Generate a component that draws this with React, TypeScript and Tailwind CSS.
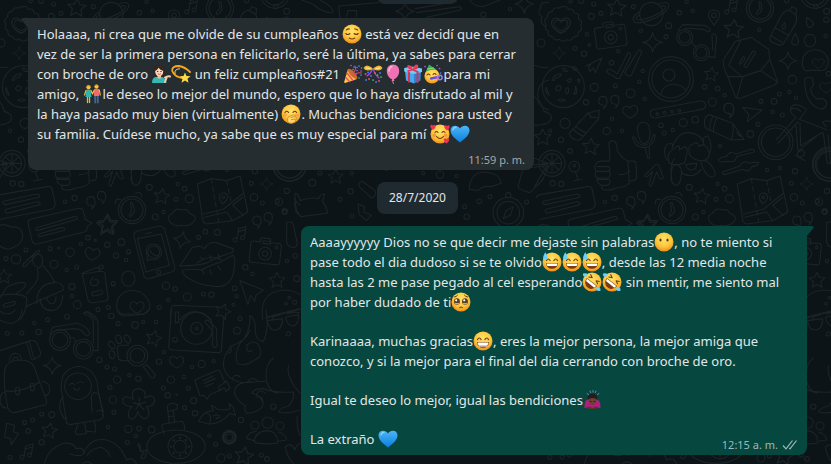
import type { ReactNode } from "react";

const STAR = "M0-25 L8-9 L25-8 L12 4 L16 22 L0 13 L-15 22 L-11 4 L-25-7 L-8-9Z";
const SPARK = "M0-28 Q3-4 28 0 Q4 4 0 28 Q-4 4-28 0 Q-4-4 0-28Z";
const HEART = "M0 19 C-12 13-25 2-22-9 C-19-20-5-20 0-10 C5-20 20-20 22-9 C24 2 12 13 0 19Z";
const QUOTE = "M-2 12 C-17 12-18-13-2-14 C15-14 15 10 1 23 C4 17 4 12-2 12Z";
const NOTES = "M-10 14 L-5-18 L17-24 L12 8 M-7-9 L15-15 M-10 14 a6 6 0 1 0 0 3 M12 8 a6 6 0 1 0 0 3";

type Mark = [x: number, y: number, scale?: number, rotate?: number];

function Marks({ d, at }: { d: string; at: Mark[] }) {
  return (
    <>
      {at.map(([x, y, s = 1, r = 0]) => (
        <path key={`${x}-${y}`} d={d} transform={`translate(${x} ${y}) rotate(${r}) scale(${s})`} />
      ))}
    </>
  );
}

function Dots({ at }: { at: [number, number, number][] }) {
  return (
    <>
      {at.map(([x, y, r]) => (
        <circle key={`${x}-${y}`} cx={x} cy={y} r={r} />
      ))}
    </>
  );
}

function Camera({ x, y, turn }: { x: number; y: number; turn: number }) {
  return (
    <g transform={`translate(${x} ${y}) rotate(${turn})`}>
      <path d="M-38-30 H-18 V-38 Q-18-42-14-42 H8 Q12-42 12-38 V-30 H38 Q46-30 46-22 V24 Q46 34 38 34 H-38 Q-46 34-46 24 V-22 Q-46-30-38-30Z M-10-34 H12 V-26 H-10Z" />
      <circle cx="0" cy="4" r="19" />
      <circle cx="0" cy="4" r="8" />
      <circle cx="32" cy="-18" r="4" />
    </g>
  );
}

function Clock({ x, y }: { x: number; y: number }) {
  return (
    <g transform={`translate(${x} ${y})`}>
      <circle r="41" />
      <circle r="33" />
      <path d="M-4-20 Q2-22 4-14 L6 4 Q4 10-8 19 Q-14 16-8 8 L0 0Z" />
    </g>
  );
}

function UpperDoodles() {
  return (
    <g transform="translate(30 0)">
      <path d="M35 22 q13-8 20 6 q16-4 17 11 q18 0 14 17 q14 8 6 20 q8 15-7 20 q2 15-15 15 q-5 14-19 8 q-13 10-22-1 q-16 6-21-8 q-16-1-14-17 q-14-7-6-20 q-10-14 5-22 q-2-16 14-17 q6-15 19-9 q4-8 9-3Z" />
      <Marks d={HEART} at={[[33, 76, 1.25], [33, 76, 0.9], [241, 335, 1, -5], [828, 262, 0.85], [805, 190, 0.8]]} />
      <Marks d={STAR} at={[[200, 23, 1.1, 5], [551, 87, 1.15, 5], [484, 223, 0.85, 8], [122, 440, 1, 5], [455, 589, 0.95, 8], [293, 672, 1.2]]} />
      <Marks d={SPARK} at={[[308, 127, 1.05], [714, 182, 0.95], [28, 160, 0.7], [770, 552, 0.7]]} />
      <Marks d={QUOTE} at={[[160, 303], [196, 300], [244, 604], [276, 588], [742, 662], [776, 652], [538, 326, 1.2]]} />
      <Marks d={NOTES} at={[[546, 20, 1]]} />
      <Camera x={182} y={108} turn={-8} />
      <circle cx="304" cy="42" r="35" />
      <path d="M268 36 C240 52 245 72 272 68 C310 62 355 36 356 18 C356 4 340 6 328 12 M269 44 C250 56 256 62 276 59 C304 54 344 34 346 22 C346 14 338 17 332 20" />
      <path d="M492 76 C486 62 474 58 475 44 C478 24 508 26 509 46 C508 60 498 64 492 76Z" />
      <circle cx="492" cy="46" r="7" />
      <Clock x={630} y={25} />
      <circle cx="795" cy="-18" r="43" />
      <circle cx="795" cy="-18" r="33" />
      <path d="M714 30 L738 44 Q744 62 732 80 L700 132 Q690 140 674 130 Q656 124 660 112 L690 54 Q698 36 714 30Z M720 30 L726 20 L740 26 L738 44 M676 84 L716 106 M664 108 L698 128 M704 68 q-14 14-4 20 q10 0 4-20Z" />
      <path d="M770 52 q-2 28 6 30 q12 0 15-12 q-8-10-21-18Z M736 100 q-18 28-6 34 q16 4 16-12Z" />
      <ellipse cx="780" cy="122" rx="17" ry="19" />
      <path d="M757 192 C755 134 834 138 835 186 Q832 214 810 212 Q786 208 770 213 Q758 210 757 192Z" />
      <circle cx="404" cy="112" r="24" />
      <circle cx="404" cy="112" r="17" />
      <circle cx="454" cy="158" r="24" />
      <circle cx="454" cy="158" r="17" />
      <path d="M424 120 Q430 138 438 140 M384 92 L398 74 L462 76 Q484 84 480 94 Q474 98 462 88 L404 84 M474 170 L494 172 L500 112 Q494 96 486 104 L488 150" />
      <path d="M520 180 L556 124 L604 112 L656 148 L660 180 L683 244 Q682 250 672 256 L574 294 Q560 298 556 290 L534 232 Q518 198 520 180Z M534 230 L578 230 L632 212 L683 246 M578 232 L560 294 M632 212 L660 178 M536 196 L572 122 M536 196 L576 230 M568 188 L580 170 Q588 172 580 184 L570 194Z M582 196 L608 154 Q618 152 616 160 L590 202 Q582 204 582 196Z" />
      <circle cx="40" cy="260" r="63" />
      <path d="M6 240 q10-20 28-18 q-4 12-18 12 q-2 10-10 6Z M38 204 q12 0 14 10 q-12 4-14-10Z M68 200 q18 4 14 12 q-14 0-14-12Z M52 242 q10-14 12 0 q-4 10-12 0Z M16 266 q8-16 18-4 q-6 20-18 4Z M46 276 q2-18 10-10 q0 20-8 14Z M70 282 q8-6 6-24 q8 10 2 24Z M24 300 q10-6 22 0 q-10 8-22 0Z M82 240 q10-8 6 8Z M-12 262 q-4 20 10 24Z" />
      <path d="M108 198 L156 174 L136 218 L130 204 L120 214 Q112 206 122 194Z" />
      <path d="M172 208 Q184 206 202 222 L234 158 Q244 158 242 168 L208 236 Q200 238 190 228 Q164 216 172 208Z M224 218 L266 150 Q276 148 274 160 L244 226 Q234 232 224 218Z" />
      <circle cx="363" cy="237" r="67" />
      <circle cx="363" cy="237" r="57" />
      <circle cx="357" cy="225" r="18" />
      <path d="M332 284 Q340 252 372 252 Q400 256 408 272" />
      <path d="M304 330 L450 303 Q466 302 467 316 Q466 326 456 328 L316 354 Q302 354 301 342 Q300 334 304 330Z" />
      <Dots at={[[322, 342, 4], [344, 338, 4], [366, 335, 4], [388, 332, 4]]} />
      <path d="M58 400 L112 340 L148 330 L146 356 L92 418 Q84 424 74 418 Q60 412 58 400Z M112 340 Q122 344 122 352 Q138 350 146 356 M70 388 Q80 400 100 408 M78 380 Q90 392 108 398" />
      <path d="M464 370 Q460 350 478 344 L548 370 L582 418 L544 420 L470 386 Q462 380 464 370Z M502 352 Q490 372 490 396 M490 348 Q478 366 480 390 M548 370 Q554 386 544 420 M560 396 q4 10 16 14" />
      <path d="M578 322 L636 330 L592 365 L596 344Z" />
      <path d="M262 390 Q262 368 280 366 Q300 368 300 394 Q302 428 282 432 Q268 430 262 390Z M248 416 Q258 448 290 442 Q314 432 316 406 Q310 400 308 412 Q302 434 282 436 Q262 434 254 412 Q246 408 248 416Z M286 446 L294 476 Q302 476 298 464 L298 442" />
      <path d="M188 422 Q202 424 202 452 Q212 470 234 484 L238 550 Q224 562 198 564 Q184 572 164 570 Q152 566 156 556 Q138 550 142 536 Q132 526 138 514 Q130 500 140 488 Q150 480 178 484 Q182 454 176 432 Q180 420 188 422Z M142 500 h34 q10 8-2 14 h-36 M142 514 h36 q8 10-4 20 h-32 M144 538 h34 q6 12-4 18 h-20 M236 484 Q256 480 258 490 L260 534 Q256 544 238 542 M208 524 Q226 524 238 514" />
      <path d="M366 540 Q358 490 374 476 M350 480 Q336 450 352 432 Q374 426 366 444 Q384 396 414 398 Q458 402 462 436 Q454 408 474 408 Q492 440 476 466 M358 490 Q348 464 364 452 L380 440 Q392 434 388 450 L404 440 Q416 444 410 464 L404 488 Q378 500 358 490Z M424 434 L436 428 Q448 430 446 440 Q462 428 472 444 Q488 470 462 482 Q436 484 420 466 Q412 444 424 434Z M378 492 Q400 502 394 524 Q392 556 376 557 Q360 548 364 522 Q364 498 378 492Z M452 484 Q474 474 492 510 Q502 528 486 532 Q464 528 452 484Z M394 518 Q428 540 454 508 M408 494 Q424 490 440 490 Q440 510 424 510 Q410 510 408 494Z" />
      <path d="M284 526 L318 493 Q326 492 328 500 L340 534 Q332 542 326 530 L320 516 L304 558 Q294 560 298 548 L308 514 L292 530 Q284 532 284 526Z" />
      <path d="M506 478 Q520 468 530 470 Q538 450 558 462 L604 448 Q616 446 612 456 L560 470 Q556 490 536 484 L512 486 Q504 484 506 478Z M518 516 L570 498 Q580 478 598 490 Q616 484 626 488 Q624 498 606 500 Q596 520 578 508 L524 524 Q514 522 518 516Z" />
      <path d="M562 552 L604 536 L650 542 L690 528 L713 632 Q712 640 704 642 L668 662 L590 672 Q580 670 578 658Z M580 642 L640 628 L700 580 M584 652 L650 636 L668 662 M668 616 L698 592 M668 616 L700 646" />
      <path d="M604 536 L626 664 M650 542 L664 610" strokeDasharray="14 10" />
      <path d="M638 612 Q624 596 630 584 Q642 572 652 586 Q656 598 638 612Z" />
      <circle cx="640" cy="592" r="4" />
      <circle cx="677" cy="427" r="52" />
      <circle cx="677" cy="427" r="43" />
      <circle cx="838" cy="492" r="51" />
      <circle cx="838" cy="492" r="42" />
      <path d="M680 418 L738 352 L724 340 Q716 322 732 314 Q760 316 770 330 L748 358 L832 390 M684 430 L744 366 M724 326 Q742 322 752 334 M738 378 L744 454 L810 400 M750 368 L752 438 L818 396 M818 368 Q822 360 843 364 M820 370 L828 380 M820 400 L832 490 L842 490 L834 404 M736 466 L766 482 M742 460 Q756 442 764 458 Q762 474 744 470Z" />
      <circle cx="366" cy="630" r="41" />
      <circle cx="366" cy="630" r="33" />
      <path d="M362 608 Q368 606 370 618 L374 632 Q372 642 360 650 Q354 646 364 634Z M316 612 Q314 594 332 598 M376 580 Q392 572 396 590" />
      <path d="M480 666 Q468 646 488 640 Q496 622 518 630 Q536 626 538 640 Q562 646 554 662 Q540 682 512 676 Q494 682 480 666Z" />
      <path d="M764 238 Q772 228 788 234 L790 256 L782 266 Q784 288 804 298 Q816 290 830 306 Q832 322 814 328 Q764 316 764 238Z" />
      <circle cx="6" cy="490" r="39" />
      <circle cx="6" cy="490" r="29" />
      <path d="M6 462 V518 M-22 490 H34 M-14 470 L26 510 M26 470 L-14 510" />
      <circle cx="73" cy="500" r="16" />
      <circle cx="73" cy="497" r="4" />
      <path d="M77 516 L84 540 M70 543 L96 538" />
      <path d="M-42 594 Q-40 586-30 584 L112 560 Q124 558 126 566 L136 612 Q134 624 124 628 L-30 658 M-20 604 L80 582 Q92 582 88 592 L-14 614 Q-24 612-20 604Z M-12 628 L78 606 Q92 604 90 614 L-8 640 Q-18 636-12 628Z" />
      <path d="M-46 196 Q-20 206-6 202 M-48 290 Q-20 310-18 334 Q10 340 2 362 Q-10 376-46 376 M-48 474 L-6 490 L-46 560 M-46 494 H-10" />
      <Dots
        at={[
          [124, 49, 9], [153, 40, 6], [131, 12, 6], [250, 20, 6], [388, 38, 7], [428, 32, 5], [356, 77, 9], [348, 110, 6], [111, 103, 5],
          [118, 135, 4], [75, 145, 6], [102, 161, 8], [205, 154, 5], [185, 188, 7], [278, 213, 5], [268, 245, 5], [133, 262, 12],
          [196, 257, 6], [242, 280, 13], [284, 296, 5], [108, 307, 8], [464, 261, 7], [503, 266, 7], [524, 286, 5], [487, 306, 12],
          [628, 89, 5], [829, 59, 8], [827, 107, 5], [727, 239, 13], [688, 282, 6], [718, 276, 5], [738, 293, 5], [633, 304, 6],
          [672, 304, 9], [668, 336, 5], [697, 345, 6], [45, 370, 15], [186, 356, 5], [170, 393, 11], [216, 392, 5], [33, 419, 8],
          [60, 453, 7], [0, 392, 5], [333, 376, 7], [343, 399, 6], [368, 390, 5], [400, 368, 12], [436, 359, 10], [624, 373, 6],
          [601, 402, 10], [510, 438, 5], [8, 550, 8], [34, 552, 8], [165, 605, 5], [194, 594, 8], [418, 562, 9], [503, 552, 5],
          [524, 566, 7], [538, 596, 12], [498, 598, 6], [436, 651, 9], [461, 636, 5], [651, 510, 5], [690, 504, 5], [735, 514, 8],
          [724, 550, 6], [732, 592, 11], [757, 609, 6], [807, 605, 11], [831, 573, 8], [824, 636, 6], [836, 221, 7], [-27, 129, 12],
          [62, 4, 5], [93, 3, 7], [272, 92, 5], [410, 5, 5], [710, 3, 6],
        ]}
      />
    </g>
  );
}

function MiddleDoodles() {
  return (
    <g transform="translate(0 510)">
      <path d="M84 158 Q84 150 94 147 L236 115 Q248 114 250 124 L256 148 L276 160 L262 170 Q262 182 252 186 L112 222 Q100 224 96 212Z M108 174 L222 140 Q234 138 232 148 L112 182 Q104 180 108 174Z M116 192 L184 173 Q196 172 194 181 L120 200 Q112 198 116 192Z" />
      <path d="M-12 172 Q10 156 34 172 Q60 166 68 192 Q70 226 24 238 Q-14 230-20 200" />
      <path d="M402 200 Q400 188 410 184 L478 168 Q490 168 494 178 L524 290 Q526 302 514 306 L448 326 Q436 328 432 318Z M412 206 L484 192 L508 286 L438 306Z M436 192 L454 187" />
      <path d="M442 272 L442 256 Q430 224 460 222 Q488 226 484 254 Q470 274 452 268Z M450 240 q10 22 26 16" />
      <circle cx="461" cy="246" r="18" />
      <circle cx="476" cy="307" r="6" />
      <path d="M540 288 L576 234 Q596 222 614 236 Q628 212 650 218 L698 236 Q706 244 690 250 Q650 262 624 278 Q590 288 540 288Z M548 300 Q580 296 604 300 Q640 282 658 278 L698 256 Q710 266 700 310 Q690 350 650 350 Q580 344 548 310Z M600 262 L612 268 M630 256 L634 270 M656 252 L654 266 M606 300 L612 312 M630 300 L634 314 M654 290 L662 300 M590 278 Q640 250 664 270" />
      <Camera x={796} y={247} turn={6} />
      <path d="M720 332 L790 360 L768 376 L764 394 L752 376 L744 404Z" />
      <path d="M246 310 L292 292 L300 304 L314 306 L324 384 Q324 392 316 393 L276 399 Q266 398 264 390Z M248 312 L300 304 M280 322 Q264 336 276 346 Q292 350 296 336 Q290 324 284 330 M276 368 L302 360 Q312 362 306 372 L282 378 Q272 376 276 368Z" />
      <ellipse cx="385" cy="326" rx="20" ry="23" />
      <path d="M350 406 C352 344 446 348 450 412 Q444 436 416 434 L370 438 Q350 434 350 406Z" />
      <path d="M512 460 Q508 408 522 406 L664 412 M540 450 Q580 400 634 450" />
      <path d="M860 158 Q876 152 880 164 L892 220 Q890 234 876 232 Q862 230 860 214Z M884 84 Q888 100 900 104 M884 96 Q884 132 900 136" />
      <path d="M70 282 L112 242 Q120 238 118 246 L76 290 Q66 292 70 282Z M96 262 Q108 244 124 258 Q134 280 118 294 Q98 292 96 262Z M128 286 Q150 308 164 336 Q192 340 190 360 Q170 370 140 382 L78 410 M112 296 Q120 330 98 350 L80 372 M110 400 Q110 340 164 338 M120 386 Q122 420 156 422 Q186 418 188 376 M140 382 Q142 400 156 402 Q168 398 168 380 M0 384 L20 352 Q48 336 72 338 Q82 342 70 356 L44 374 M0 376 Q60 366 80 384 Q82 420 60 450 M12 402 L44 394 Q50 400 40 406 L14 412 Q6 408 12 402Z M250 430 Q260 420 286 450" />
      <Marks d={STAR} at={[[320, 167, 1.2], [12, 320, 0.9], [831, 331, 0.95], [668, 424, 0.95, 20]]} />
      <Marks d={SPARK} at={[[546, 210, 0.95, 12], [800, 42, 0]]} />
      <Marks d={HEART} at={[[277, 252, 1, 10], [411, 412, 0.95]]} />
      <Marks d={NOTES} at={[[721, 194, 1]]} />
      <path d="M788 450 Q776 366 850 360 Q880 360 900 374 M798 444 L900 418 M816 450 Q820 436 840 436 M860 432 Q880 424 898 428" />
      <Dots
        at={[
          [264, 203, 7], [286, 211, 3], [243, 223, 5], [322, 224, 8], [364, 216, 10], [210, 247, 13], [150, 236, 6], [176, 234, 3],
          [78, 240, 6], [18, 266, 6], [48, 268, 14], [162, 283, 12], [348, 257, 8], [386, 245, 6], [378, 270, 5], [200, 300, 5],
          [230, 291, 6], [304, 291, 6], [216, 350, 9], [216, 378, 5], [232, 404, 12], [340, 341, 6], [294, 419, 6], [325, 412, 6],
          [334, 438, 8], [201, 440, 7], [498, 347, 11], [525, 357, 7], [505, 391, 5], [562, 381, 12], [610, 372, 6], [634, 374, 8],
          [478, 412, 6], [596, 202, 6], [616, 185, 7], [652, 187, 9], [736, 292, 8], [704, 355, 7], [710, 378, 5], [757, 312, 5],
          [700, 404, 4], [861, 273, 5], [886, 257, 7], [890, 326, 9], [854, 126, 7], [868, 383, 4], [884, 397, 6], [858, 401, 4],
        ]}
      />
    </g>
  );
}

function LowerDoodles() {
  return (
    <g transform="translate(0 930)">
      <circle cx="180" cy="90" r="31" />
      <circle cx="180" cy="90" r="23" />
      <circle cx="250" cy="117" r="30" />
      <circle cx="250" cy="117" r="22" />
      <path d="M208 84 Q226 78 226 96 M150 74 L158 52 L230 40 Q266 50 270 72 Q260 84 252 70 Q244 56 220 56 L166 62 M252 10 Q260 0 272 10 Q292 22 294 38 V122 L280 122 M252 12 Q280 20 280 40 V98" />
      <path d="M0 122 L92 92 Q106 90 110 98 L122 128 Q122 138 112 142 L98 150 M80 98 L94 148 M88 96 L102 146 M28 156 Q28 132 46 130 Q64 132 64 150 M36 154 Q46 130 56 150" />
      <path d="M14 180 Q20 152 56 150 Q98 150 104 176 L140 272 Q142 284 130 286 L44 308 Q28 308 24 294 Q10 236 14 180Z M16 242 Q50 252 118 218 M14 246 Q0 250 0 276 Q6 296 22 294 M126 214 Q148 216 150 240 Q144 258 136 256" />
      <rect x="47" y="232" width="12" height="22" rx="5" />
      <rect x="91" y="220" width="12" height="22" rx="5" />
      <path d="M200 340 L184 240 Q178 176 236 169 Q292 176 294 240 L310 316 Q310 328 296 330 L210 344Z M190 262 Q176 270 180 300 Q190 330 200 326 M276 306 L274 256 Q284 240 298 256 L308 300 M290 304 L310 300 L308 318 M232 344 L230 356 L226 366 Q228 376 240 374 L260 370 L254 340 M256 352 L258 364 L286 366 Q290 358 282 334" />
      <circle cx="234" cy="229" r="40" />
      <path d="M208 224 q8-8 16 0 M232 220 q8-8 18-2 M220 234 q12 14 20 0" />
      <circle cx="412" cy="137" r="31" />
      <circle cx="412" cy="137" r="22" />
      <path d="M430 170 L440 164 L466 194 Q464 206 454 204Z M386 106 L360 106 Q350 108 352 124 L356 148 Q364 154 388 152" />
      <ellipse cx="335" cy="105" rx="8" ry="12" transform="rotate(-40 335 105)" />
      <ellipse cx="356" cy="88" rx="8" ry="13" transform="rotate(-15 356 88)" />
      <ellipse cx="382" cy="87" rx="8" ry="13" transform="rotate(-30 382 87)" />
      <ellipse cx="336" cy="134" rx="8" ry="12" transform="rotate(-10 336 134)" />
      <path d="M514 0 L506 112 Q508 120 520 120 L654 128 Q664 128 664 120 L672 20" />
      <circle cx="590" cy="55" r="48" />
      <circle cx="590" cy="55" r="18" />
      <circle cx="590" cy="55" r="4" />
      <circle cx="525" cy="89" r="7" />
      <path d="M526 6 h10 v32 h-10Z M614 36 Q618 26 628 34 L650 56 V94 Q656 110 644 113 Q634 108 638 94 V62Z" />
      <path d="M750 16 Q768 28 766 66 Q770 96 790 94 Q808 60 798 0 M750 16 Q752 70 720 100 Q700 140 714 162 Q736 170 764 150 Q786 140 782 122 Q770 80 740 106 M750 60 Q742 90 696 108 Q664 140 672 176 Q686 214 730 218 L796 214 M730 218 Q700 226 704 252 Q716 280 736 286 Q730 306 744 310 Q788 304 790 280 Q780 254 756 250 Q760 236 790 236 Q820 250 880 246 Q884 270 866 288 Q838 294 836 306 Q860 314 900 300 M820 144 Q798 160 798 200 Q800 240 830 250 M866 166 Q856 200 900 250 M740 110 Q740 130 756 122 M690 108 Q700 124 686 130 M698 206 Q700 190 720 200 M742 216 Q756 196 774 214 M770 256 Q776 232 796 250 M768 262 Q790 256 788 276" />
      <path d="M798 22 L900 -4 M802 32 Q808 60 822 60 Q848 60 848 26Z M856 22 Q862 48 880 48 Q896 44 896 14Z" />
      <path d="M858 76 q4-16 14-8 q0 14-14 8Z" />
      <path d="M584 210 L652 181 Q660 180 662 188 L674 216 M584 210 L600 258 L612 256 L620 268 L632 252 L664 240 M610 212 L640 198 M612 220 L646 206 M616 230 L640 220 M656 230 L680 214 L690 234 L678 244 L674 234 L658 240Z" />
      <path d="M596 334 Q610 302 640 302 L634 286 L654 298 Q680 302 690 296 L688 280 L700 294 L706 316 L690 310 Q660 344 626 342Z M620 308 Q640 320 628 340 M640 318 q10-6 18 0 M648 326 l10-4" />
      <path d="M418 236 Q440 240 434 264 Q462 248 464 272 Q462 290 440 290 Q456 318 436 326 Q420 326 414 304 Q404 334 390 326 Q378 308 396 290 Q366 288 368 270 Q374 252 400 268 Q390 238 418 236Z M418 284 V262 M418 284 L436 276 M418 284 L432 300 M418 284 L408 298 M418 284 L400 278" />
      <ellipse cx="528" cy="410" rx="88" ry="50" />
      <circle cx="540" cy="410" r="36" />
      <circle cx="540" cy="410" r="19" />
      <path d="M492 372 L486 350 Q484 344 492 342 L546 334 Q554 338 554 360 M508 340 L502 290 Q506 280 518 280 L532 284 V298 L520 300 L524 336 M504 304 L520 302 M506 320 L522 318 M442 420 L420 424 Q424 400 414 402 Q418 420 432 430 Q414 444 430 446 Q440 444 438 426Z" />
      <Dots at={[[540, 384, 2], [558, 391, 2], [567, 410, 2], [558, 429, 2], [540, 437, 2], [521, 429, 2], [513, 410, 2], [521, 391, 2]]} />
      <circle cx="688" cy="382" r="18" strokeDasharray="12 7" strokeWidth="9" />
      <circle cx="688" cy="382" r="10" />
      <circle cx="803" cy="338" r="17" />
      <circle cx="765" cy="346" r="12" />
      <circle cx="840" cy="348" r="12" />
      <path d="M764 398 Q762 366 800 362 Q836 366 832 400 Q800 404 764 398Z M770 364 Q744 366 740 386 L762 392 M836 366 Q858 372 860 390 L836 394" />
      <path d="M134 462 Q140 420 190 400 Q220 396 228 416 Q250 410 252 428 Q246 444 210 432 M252 428 Q262 400 290 390 Q350 380 380 450 Q400 440 410 462 M262 436 Q272 416 304 412 Q324 420 330 440 M248 462 Q258 450 276 462" />
      <path d="M20 340 L44 346 L40 366 L56 370 L34 404 L32 386 L14 382Z" />
      <path d="M0 30 Q30 46 46 36 Q62 28 66 0 M0 4 Q24 22 46 0 M354 0 Q360 16 380 12 L430 12 Q440 8 444 0" />
      <path d="M856 410 Q876 396 884 420 Q890 404 900 400 M856 410 Q860 440 880 460 M892 320 Q888 350 900 376" />
      <Marks d={STAR} at={[[461, 85, 0.95, 15], [148, 362, 0.95, 10], [732, 438, 1.1, 10]]} />
      <Marks d={SPARK} at={[[157, 167, 0.95]]} />
      <Marks d={HEART} at={[[530, 156, 0.95]]} />
      <Marks d={NOTES} at={[[82, 426, 1]]} />
      <Dots
        at={[
          [22, 70, 6], [66, 69, 6], [116, 66, 8], [103, 39, 5], [143, 29, 6], [354, 41, 6], [405, 45, 10], [430, 36, 5], [468, 36, 5],
          [492, 126, 5], [477, 155, 8], [298, 150, 8], [321, 171, 6], [344, 177, 6], [351, 209, 11], [388, 196, 5], [415, 206, 8],
          [330, 232, 6], [339, 269, 11], [342, 307, 6], [513, 209, 11], [552, 201, 5], [490, 234, 6], [503, 256, 8], [530, 254, 2],
          [565, 235, 6], [581, 272, 9], [554, 293, 6], [585, 310, 8], [605, 162, 11], [641, 154, 5], [576, 171, 5], [720, 26, 6],
          [711, 62, 10], [820, 290, 8], [723, 330, 8], [125, 312, 6], [155, 314, 9], [98, 330, 6], [74, 338, 6], [85, 363, 7],
          [125, 397, 8], [30, 442, 6], [324, 351, 5], [385, 357, 11], [417, 356, 7], [455, 359, 10], [407, 378, 5], [382, 397, 6],
          [628, 377, 5], [647, 403, 6], [663, 444, 12], [688, 438, 6], [784, 435, 6], [801, 447, 7],
        ]}
      />
    </g>
  );
}

function CentreDoodles() {
  return (
    <g transform="translate(810 0)">
      <path d="M80 632 Q72 590 76 580 Q86 580 90 602 Q120 590 146 596 Q150 582 164 582 L158 606 Q172 620 172 640 L92 650Z M264 612 L284 620 L282 636 L304 646 L290 662 L268 644Z M270 562 Q262 548 276 544 L316 572 Q320 590 304 594 Q290 580 270 562Z" />
      <path d="M598 568 Q600 516 646 516 Q690 520 694 550 L664 560 Q640 556 624 572Z M760 504 L836 498 L818 540 L780 578 Q748 570 744 560Z" />
      <circle cx="715" cy="638" r="46" />
      <circle cx="715" cy="638" r="34" />
      <circle cx="715" cy="586" r="8" />
      <path d="M730 620 L722 644 L700 656 L708 632Z" />
      <circle cx="60" cy="494" r="50" />
      <circle cx="60" cy="494" r="40" />
      <path d="M96 0 L128 12 Q160 40 188 38 Q192 24 164 8 L150 0 M210 54 L206 18 L326 8 M230 50 L234 32 H260 V50 M436 26 L560 4 M440 38 L570 20 Q580 24 570 30 L470 52 M600 0 Q610 20 640 20 Q690 0 700-4" />
      <path d="M830 80 Q806 70 816 50 Q800 40 812 24 Q810 4 836 8 M836 240 Q800 250 804 290 Q800 320 836 330" />
      <Marks d={SPARK} at={[[405, 34, 1], [763, 12, 1]]} />
      <Marks d={STAR} at={[[197, 530, 0.9], [818, 412, 1]]} />
      <Dots
        at={[
          [127, 548, 10], [150, 519, 6], [242, 574, 8], [245, 520, 5], [210, 598, 6], [22, 604, 6], [44, 634, 8], [246, 648, 6],
          [350, 506, 5], [460, 520, 5], [510, 524, 11], [560, 528, 5], [584, 620, 6], [628, 604, 7], [660, 590, 6], [590, 650, 8],
          [770, 606, 6], [640, 44, 8], [720, 28, 5], [18, 20, 6], [50, 34, 9],
        ]}
      />
    </g>
  );
}

function Wallpaper() {
  return (
    <svg className="absolute inset-0 size-full" aria-hidden="true">
      <defs>
        <radialGradient id="face" cx="50%" cy="35%" r="65%">
          <stop offset="0" stopColor="#ffe36b" />
          <stop offset="0.6" stopColor="#fdc73c" />
          <stop offset="1" stopColor="#ee8f1c" />
        </radialGradient>
        <linearGradient id="blue" x1="0" y1="0" x2="0" y2="1">
          <stop offset="0" stopColor="#4db5f8" />
          <stop offset="1" stopColor="#0a7fdc" />
        </linearGradient>
        <g id="tile" transform="scale(.3333)" fill="none" stroke="#1d2326" strokeWidth="3.4" strokeLinecap="round" strokeLinejoin="round">
          <UpperDoodles />
          <MiddleDoodles />
          <LowerDoodles />
          <CentreDoodles />
        </g>
      </defs>
      {[0, 540, 1080, 1620].map((x) => (
        <use key={x} href="#tile" x={x} />
      ))}
    </svg>
  );
}

function Emoji({ label, children }: { label: string; children: ReactNode }) {
  return (
    <svg role="img" aria-label={label} viewBox="0 0 20 20" className="inline-block size-5 align-[-5px]" fill="none" strokeLinecap="round" strokeLinejoin="round">
      {children}
    </svg>
  );
}

const Disc = () => <circle cx="10" cy="10" r="9.5" fill="url(#face)" />;

const Relieved = () => (
  <Emoji label="cara aliviada">
    <Disc />
    <path d="M3.8 9.5 q2 2 4 0 M12.2 9.5 q2 2 4 0 M7.2 14 q2.8 2 5.6 0 M4.4 6 q1.5-1.4 3-1 M12.6 5 q1.8-.2 3 1" stroke="#6b3a12" strokeWidth="1.1" />
  </Emoji>
);

const TippingWoman = () => (
  <Emoji label="mujer">
    <path d="M4 12 Q1 7 3.500 3 Q8-1 12.500 3 Q15 7 12.500 13Z" fill="#33241f" />
    <path d="M1 19 Q1 13.500 5 13 H11 Q15 14 15.500 19Z" fill="#35b8b4" />
    <path d="M6.500 11 h3.500 v3 q-1.700 1.400-3.500 0Z" fill="#e8b995" />
    <ellipse cx="8.200" cy="7.500" rx="4" ry="5" fill="#f8d8bc" />
    <path d="M4 7 Q4 2 9 2 Q12 3 12.500 7 Q9 6 7.500 3.800 Q6.500 6 4 7Z" fill="#33241f" />
    <path d="M6.500 7.500 h.4 M9.800 7.500 h.4" stroke="#33241f" strokeWidth="1" />
    <path d="M7 10 q1.300 1 2.600 0" stroke="#d04545" strokeWidth=".9" />
    <path d="M14 18 L15.500 14 M14 13.500 Q17 11.500 19 12.500" stroke="#f3cda9" strokeWidth="2" />
  </Emoji>
);

const Dizzy = () => (
  <Emoji label="estrella mareada">
    <path d="M13.500 14.500 Q3 13 1.300 7 Q.5 2 8 2 Q14 3 19 8" stroke="#f7a91b" strokeWidth="1.800" />
    <path d="M4 9.500 Q3 5 8.500 4.800" stroke="#ffd54a" strokeWidth="1" />
    <path d="M14 8.500 L15.500 12 L19.500 12.200 L16.500 14.800 L17.500 18.800 L14 16.500 L10.500 18.800 L11.500 14.800 L8.800 12.300 L12.500 12Z" fill="#ffdc48" />
  </Emoji>
);

const Confetti = () => (
  <>
    <path d="M11 3 h.1 M16 2 h.1 M18 11 h.1 M14 6.500 h.1" stroke="#4f7df0" strokeWidth="1.700" />
    <path d="M14 3.500 h.1 M18 7 h.1 M8 1.500 h.1 M13 10 h.1" stroke="#b84be0" strokeWidth="1.600" />
    <path d="M16 14 h.1 M10 5.500 h.1 M18.500 4 h.1" stroke="#3fc463" strokeWidth="1.500" />
  </>
);

const Popper = () => (
  <Emoji label="confeti">
    <path d="M5 5 L14 15 L2 19 Q1 19 1.300 17.500Z" fill="#ffc843" />
    <path d="M4 9 L9.800 16.300 M2.700 13.500 L6.500 17.500" stroke="#e7506d" strokeWidth="1.500" />
    <ellipse cx="9.600" cy="9.800" rx="6.500" ry="2.400" transform="rotate(48 9.600 9.800)" fill="#c96a28" />
    <path d="M10 9 Q14 5 12 2 M11 11 Q14 8 18.500 9" stroke="#e7405d" strokeWidth="1.100" />
    <Confetti />
  </Emoji>
);

const ConfettiBall = () => (
  <Emoji label="bola de confeti">
    <path d="M9.500 5 Q7.500 10 4 12 M10.500 5 Q11 10 16 14" stroke="#a84ae0" strokeWidth="1.200" />
    <path d="M9.500 4 Q3-1 .5 4 Q2 8 9.500 5.500Z M10.500 4 Q17-1 19.500 4 Q18 8 10.500 5.500Z" fill="#eeb52e" />
    <path d="M3 4 l4 .5 M17 4 l-4 .5" stroke="#fff0a6" strokeWidth="1" />
    <path d="M5 8.500 h.1 M8 12 h.1 M3 16 h.1 M13 18 h.1 M17 9 h.1" stroke="#4471f2" strokeWidth="1.900" />
    <path d="M12 9 h.1 M6 15 h.1 M16 17 h.1 M2.500 10 h.1" stroke="#ef4a62" strokeWidth="1.800" />
    <path d="M14.500 11 h.1 M10 16 h.1 M18 13 h.1" stroke="#43c867" strokeWidth="1.700" />
  </Emoji>
);

const Balloon = () => (
  <Emoji label="globo">
    <path d="M10 15 q-1 2 .3 4.500" stroke="#b9acb3" strokeWidth=".9" />
    <path d="M10 .5 C14 .5 16.500 3.500 16.200 7.500 C16 11.500 13 15 10.800 15.300 L11.500 17 H8.500 L9.200 15.300 C7 15 4 11.500 3.800 7.500 C3.500 3.500 6 .5 10 .5Z" fill="#ee72b4" />
    <path d="M6 7 Q6 3.500 9 2.500" stroke="#fbb8dc" strokeWidth="1.500" />
  </Emoji>
);

const Gift = () => (
  <Emoji label="regalo">
    <path d="M2 6.500 L11 8.500 V19.500 L3 16.500Z" fill="#4aa7ea" />
    <path d="M11 8.500 L18 6.500 L17.500 16.500 L11 19.500Z" fill="#2f84cf" />
    <path d="M1.200 4 L9 2.500 L19 4.500 V8 L11 10 L1.200 7.500Z" fill="#7cc7f7" />
    <path d="M6 8.500 V17.800 M14.500 8.800 V18" stroke="#d9304c" strokeWidth="1.900" />
    <path d="M5 7 L14 4 M6 4 L15 8" stroke="#d9304c" strokeWidth="1.500" />
    <path d="M10 4.500 Q3 5 4.500 1.500 Q7-.5 10 4.500 Q12-1 15 1 Q16.500 4 10 4.500Z" fill="#e2425c" />
  </Emoji>
);

const PartyFace = () => (
  <Emoji label="cara de fiesta">
    <circle cx="9" cy="12" r="7.600" fill="url(#face)" />
    <path d="M3 7.500 L6 .5 L13.500 5.500 Q8 5 3 7.500Z" fill="#2fae62" />
    <path d="M4.500 5 l6-1" stroke="#8fe36b" strokeWidth="1.200" />
    <path d="M4 11 q1.500-2 3 0 M10 10.500 q1.500-2 3 0" stroke="#6b3a12" strokeWidth="1.100" />
    <path d="M8 14.500 L15.500 13" stroke="#6a4fe0" strokeWidth="2.300" />
    <circle cx="16.800" cy="13.500" r="2.300" stroke="#a37cf5" strokeWidth="1.500" />
    <path d="M14 1.500 h.1 M17.500 9 h.1" stroke="#4f7df0" strokeWidth="1.700" />
    <path d="M16.500 4.500 h.1 M2 2.500 h.1" stroke="#b84be0" strokeWidth="1.700" />
  </Emoji>
);

const Couple = () => (
  <Emoji label="pareja">
    <path d="M4.500 12 V18.500 M6.500 12 V18.500" stroke="#e8b33c" strokeWidth="1.300" />
    <path d="M12.200 11 V18.500 M14.800 11 V18.500" stroke="#3f6590" strokeWidth="1.900" />
    <path d="M3.500 5.500 H7.500 L8.500 13 H2.500Z" fill="#2fb4b4" />
    <path d="M11 5 H16 L16.300 12 H10.800Z" fill="#ee6a6d" />
    <path d="M3 6.500 L1.500 11 M8 6.500 L9.500 10 L11 6.500 M16.300 6 L17.300 11" stroke="#f5bd3c" strokeWidth="1.200" />
    <circle cx="5.500" cy="3.200" r="2.100" fill="#fbc63d" />
    <circle cx="13.500" cy="2.700" r="2.100" fill="#fbc63d" />
    <path d="M3.500 3 Q5.500-.5 7.500 3 M11.500 2.300 Q13.500-.8 15.500 2.300" stroke="#c58520" strokeWidth="1" />
  </Emoji>
);

const HandOverMouth = () => (
  <Emoji label="mano sobre la boca">
    <Disc />
    <path d="M4 8.500 q1.800-2.500 3.600 0 M12 8.500 q1.800-2.500 3.600 0" stroke="#6b3a12" strokeWidth="1.100" />
    <circle cx="4" cy="11" r="1.800" fill="#f78b3c" opacity=".6" />
    <circle cx="16" cy="11" r="1.800" fill="#f78b3c" opacity=".6" />
    <path d="M7 18.500 Q5.500 14 8 12.500 L12.500 11 Q15 11 14.500 12.500 Q16 14 15 15.500 Q15 18.500 11 19.300 Q8 19.500 7 18.500Z" fill="#ffd76a" stroke="#d17f1e" strokeWidth=".8" />
    <path d="M10 13.500 l4-.8 M10.500 15.500 l4-.3" stroke="#d17f1e" strokeWidth=".8" />
  </Emoji>
);

const TinyHeart = ({ x, y }: { x: number; y: number }) => (
  <path transform={`translate(${x} ${y})`} d="M0 3 C-3 1-3.500-2-1.500-2.300 Q-.5-2.300 0-1.300 Q.5-2.300 1.500-2.300 C3.500-2 3 1 0 3Z" fill="#ee3450" />
);

const Loving = () => (
  <Emoji label="cara con corazones">
    <Disc />
    <path d="M5 8.500 q1.500-2 3 0 M12 8.500 q1.500-2 3 0 M6.500 12.500 q3.500 4 7 0" stroke="#6b3a12" strokeWidth="1.100" />
    <circle cx="4.500" cy="11.300" r="1.700" fill="#f76d3c" opacity=".6" />
    <circle cx="15.500" cy="11.300" r="1.700" fill="#f76d3c" opacity=".6" />
    <TinyHeart x={3} y={3} />
    <TinyHeart x={17} y={3.5} />
    <TinyHeart x={16.500} y={16.500} />
  </Emoji>
);

const BlueHeart = () => (
  <Emoji label="corazón azul">
    <path d="M10 18.500 C5 14.500 .3 11 .5 6 C.8 .8 7.500 .2 10 4.500 C12.500 .2 19.200 .8 19.500 6 C19.700 11 15 14.500 10 18.500Z" fill="url(#blue)" />
    <path d="M3 6 Q3.500 3.300 6 3.300" stroke="#8fd4ff" strokeWidth="1.200" />
  </Emoji>
);

const NoMouth = () => (
  <Emoji label="cara sin boca">
    <Disc />
    <ellipse cx="6.500" cy="8" rx="1.100" ry="1.500" fill="#5a3414" />
    <ellipse cx="13.500" cy="8" rx="1.100" ry="1.500" fill="#5a3414" />
  </Emoji>
);

const Grin = ({ sweat = false }: { sweat?: boolean }) => (
  <Emoji label={sweat ? "risa con sudor" : "cara radiante"}>
    <Disc />
    <path d="M4.500 8.500 q1.800-3 3.600 0 M11.900 8.500 q1.800-3 3.600 0" stroke="#6b3a12" strokeWidth="1.200" />
    <path d="M4 11 H16 Q15.500 16.800 10 16.800 Q4.500 16.800 4 11Z" fill="#7c3a12" />
    <path d="M4.700 11.500 H15.300 Q15.300 13.500 14.500 14 H5.500 Q4.700 13.500 4.700 11.500Z" fill="#fff" />
    {sweat && <path d="M3.300 .3 Q6.500 5 5.300 6.800 Q3.500 8.500 1.500 6.800 Q.3 5 3.300 .3Z" fill="#6fd0f5" />}
    {!sweat && <path d="M6 14.800 H14" stroke="#fff" strokeWidth="1.200" />}
  </Emoji>
);

const Rolling = () => (
  <Emoji label="muerto de risa">
    <Disc />
    <g transform="rotate(38 10 10)">
      <path d="M3.500 10 H16.500 Q16 17 10 17 Q4 17 3.500 10Z" fill="#7c3a12" />
      <path d="M4.200 10.500 H15.800 L15.300 13 H4.700Z" fill="#fff" />
      <path d="M4.500 5 L7.500 6.500 L4.500 8 M15.500 5 L12.500 6.500 L15.500 8" stroke="#6b3a12" strokeWidth="1.100" />
    </g>
    <path d="M1 1.500 Q5 .5 5.500 2.500 Q5 5 2.500 4.800 Q.5 4 1 1.500Z M18.500 18.800 Q14 19.500 14 17 Q14.500 15 17 15 Q19 16 18.500 18.800Z" fill="#6fd0f5" />
  </Emoji>
);

const Pleading = () => (
  <Emoji label="cara suplicante">
    <Disc />
    <ellipse cx="6" cy="9.500" rx="2.900" ry="3.200" fill="#5a3a22" />
    <ellipse cx="14" cy="9.500" rx="2.900" ry="3.200" fill="#5a3a22" />
    <circle cx="5.200" cy="8.300" r="1.100" fill="#fff" />
    <circle cx="13.200" cy="8.300" r="1.100" fill="#fff" />
    <path d="M4.500 11.500 q1.500 1 3 0 M12.500 11.500 q1.500 1 3 0" stroke="#b9d8ec" strokeWidth="1" />
    <path d="M8.500 15.500 q1.500-1.200 3 0 M3.500 5 q2-.3 3-1.700 M16.500 5 q-2-.3-3-1.700" stroke="#6b3a12" strokeWidth="1" />
  </Emoji>
);

const Bowing = () => (
  <Emoji label="reverencia">
    <path d="M4 3.500 l1.500 1 M7 1 l.7 1.600 M10 .5 v1.600 M13 1 l-.7 1.600 M16 3.500 l-1.500 1" stroke="#5b8fb0" strokeWidth="1" />
    <path d="M1.500 18 Q1 10 5 9.500 H13.500 Q18 10 17.500 18Z" fill="#b01d80" />
    <path d="M5 9 Q4.500 4 9.500 4 Q14.500 4 14 9 Q13 14.500 9.500 15 Q6 14.500 5 9Z" fill="#6a4330" />
    <path d="M4.800 9.500 Q3.800 3.800 9.500 3.800 Q15 3.800 14.200 9.500 Q9.500 6.500 4.800 9.500Z" fill="#251d1d" />
    <path d="M7 11.500 h1.200 M11 11.500 h1.200" stroke="#251d1d" strokeWidth=".9" />
    <path d="M2.500 18 Q6 15 9.500 18 Q13 15 16.500 18 Q9.500 20 2.500 18Z" fill="#5a3729" />
  </Emoji>
);

function Line({ children }: { children: ReactNode }) {
  return <span className="block h-5 whitespace-nowrap">{children}</span>;
}

export default function App() {
  return (
    <main className="relative flex min-h-screen flex-col overflow-hidden bg-[#0c1417] pr-6 pl-7 text-[13px] leading-5 text-[#e3e6e7] [font-family:'Noto_Sans',sans-serif]">
      <Wallpaper />

      <div className="relative -mt-7 h-8 w-[81px] self-center rounded-lg bg-[#1f2a30]" />

      <article className="relative mt-3.5 w-[506px] max-w-full self-start rounded-lg rounded-tl-none bg-[#262d30] px-[9px] pt-1.5 pb-0.5">
        <svg className="absolute top-0 -left-[7px] h-3 w-2" viewBox="0 0 8 12" fill="#262d30" aria-hidden="true">
          <path d="M1.500 0 H8 V11 L.5 2 Q-.3 .5 1.500 0Z" />
        </svg>
        <p>
          <Line>Holaaaa, ni crea que me olvide de su cumpleaños <Relieved /> está vez decidí que en</Line>
          <Line>vez de ser la primera persona en felicitarlo, seré la última, ya sabes para cerrar</Line>
          <Line>con broche de oro <TippingWoman /><Dizzy /> un feliz cumpleaños#21 <Popper /><ConfettiBall /><Balloon /><Gift /><PartyFace />para mi</Line>
          <Line>amigo, <Couple />le deseo lo mejor del mundo, espero que lo haya disfrutado al mil y</Line>
          <Line>la haya pasado muy bien (virtualmente) <HandOverMouth />. Muchas bendiciones para usted y</Line>
          <Line>su familia. Cuídese mucho, ya sabe que es muy especial para mí <Loving /><BlueHeart /></Line>
        </p>
        <time className="mt-2 block text-right text-[11px] leading-4 text-[#a3a8aa]">11:59 p. m.</time>
      </article>

      <time className="relative mt-3 self-center rounded-lg bg-[#1f2a30] px-3 py-1.5 text-xs leading-5">28/7/2020</time>

      <article className="relative mt-3 w-[506px] max-w-full self-end rounded-lg rounded-tr-none bg-[#064740] px-[9px] pt-1.5 pb-0.5">
        <svg className="absolute top-0 -right-[7px] h-3 w-2" viewBox="0 0 8 12" fill="#064740" aria-hidden="true">
          <path d="M6.500 0 H0 V11 L7.500 2 Q8.300 .5 6.500 0Z" />
        </svg>
        <p>
          <Line>Aaaayyyyyy Dios no se que decir me dejaste sin palabras<NoMouth />, no te miento si</Line>
          <Line>pase todo el dia dudoso si se te olvido<Grin sweat /><Grin sweat /><Grin sweat />, desde las 12 media noche</Line>
          <Line>hasta las 2 me pase pegado al cel esperando<Rolling /><Rolling /> sin mentir, me siento mal</Line>
          <Line>por haber dudado de ti<Pleading /></Line>
        </p>
        <p className="mt-[19px]">
          <Line>Karinaaaa, muchas gracias<Grin />, eres la mejor persona, la mejor amiga que</Line>
          <Line>conozco, y si la mejor para el final del dia cerrando con broche de oro.</Line>
        </p>
        <p className="mt-[19px]">
          <Line>Igual te deseo lo mejor, igual las bendiciones<Bowing /></Line>
        </p>
        <div className="mt-[19px] flex justify-between">
          <p>
            <Line>La extraño <BlueHeart /></Line>
          </p>
          <div className="mt-2 flex items-center gap-1 text-[11px] leading-4 text-[#9dbab6]">
            <time>12:15 a. m.</time>
            <svg role="img" aria-label="Entregado" className="h-3 w-4" viewBox="0 0 16 12" fill="none" stroke="currentColor" strokeWidth="1.200">
              <path d="M1 6.500 L4 9.800 L10.500 1.500 M7.300 9 L8 9.800 L14.500 1.500" />
            </svg>
          </div>
        </div>
      </article>
    </main>
  );
}
